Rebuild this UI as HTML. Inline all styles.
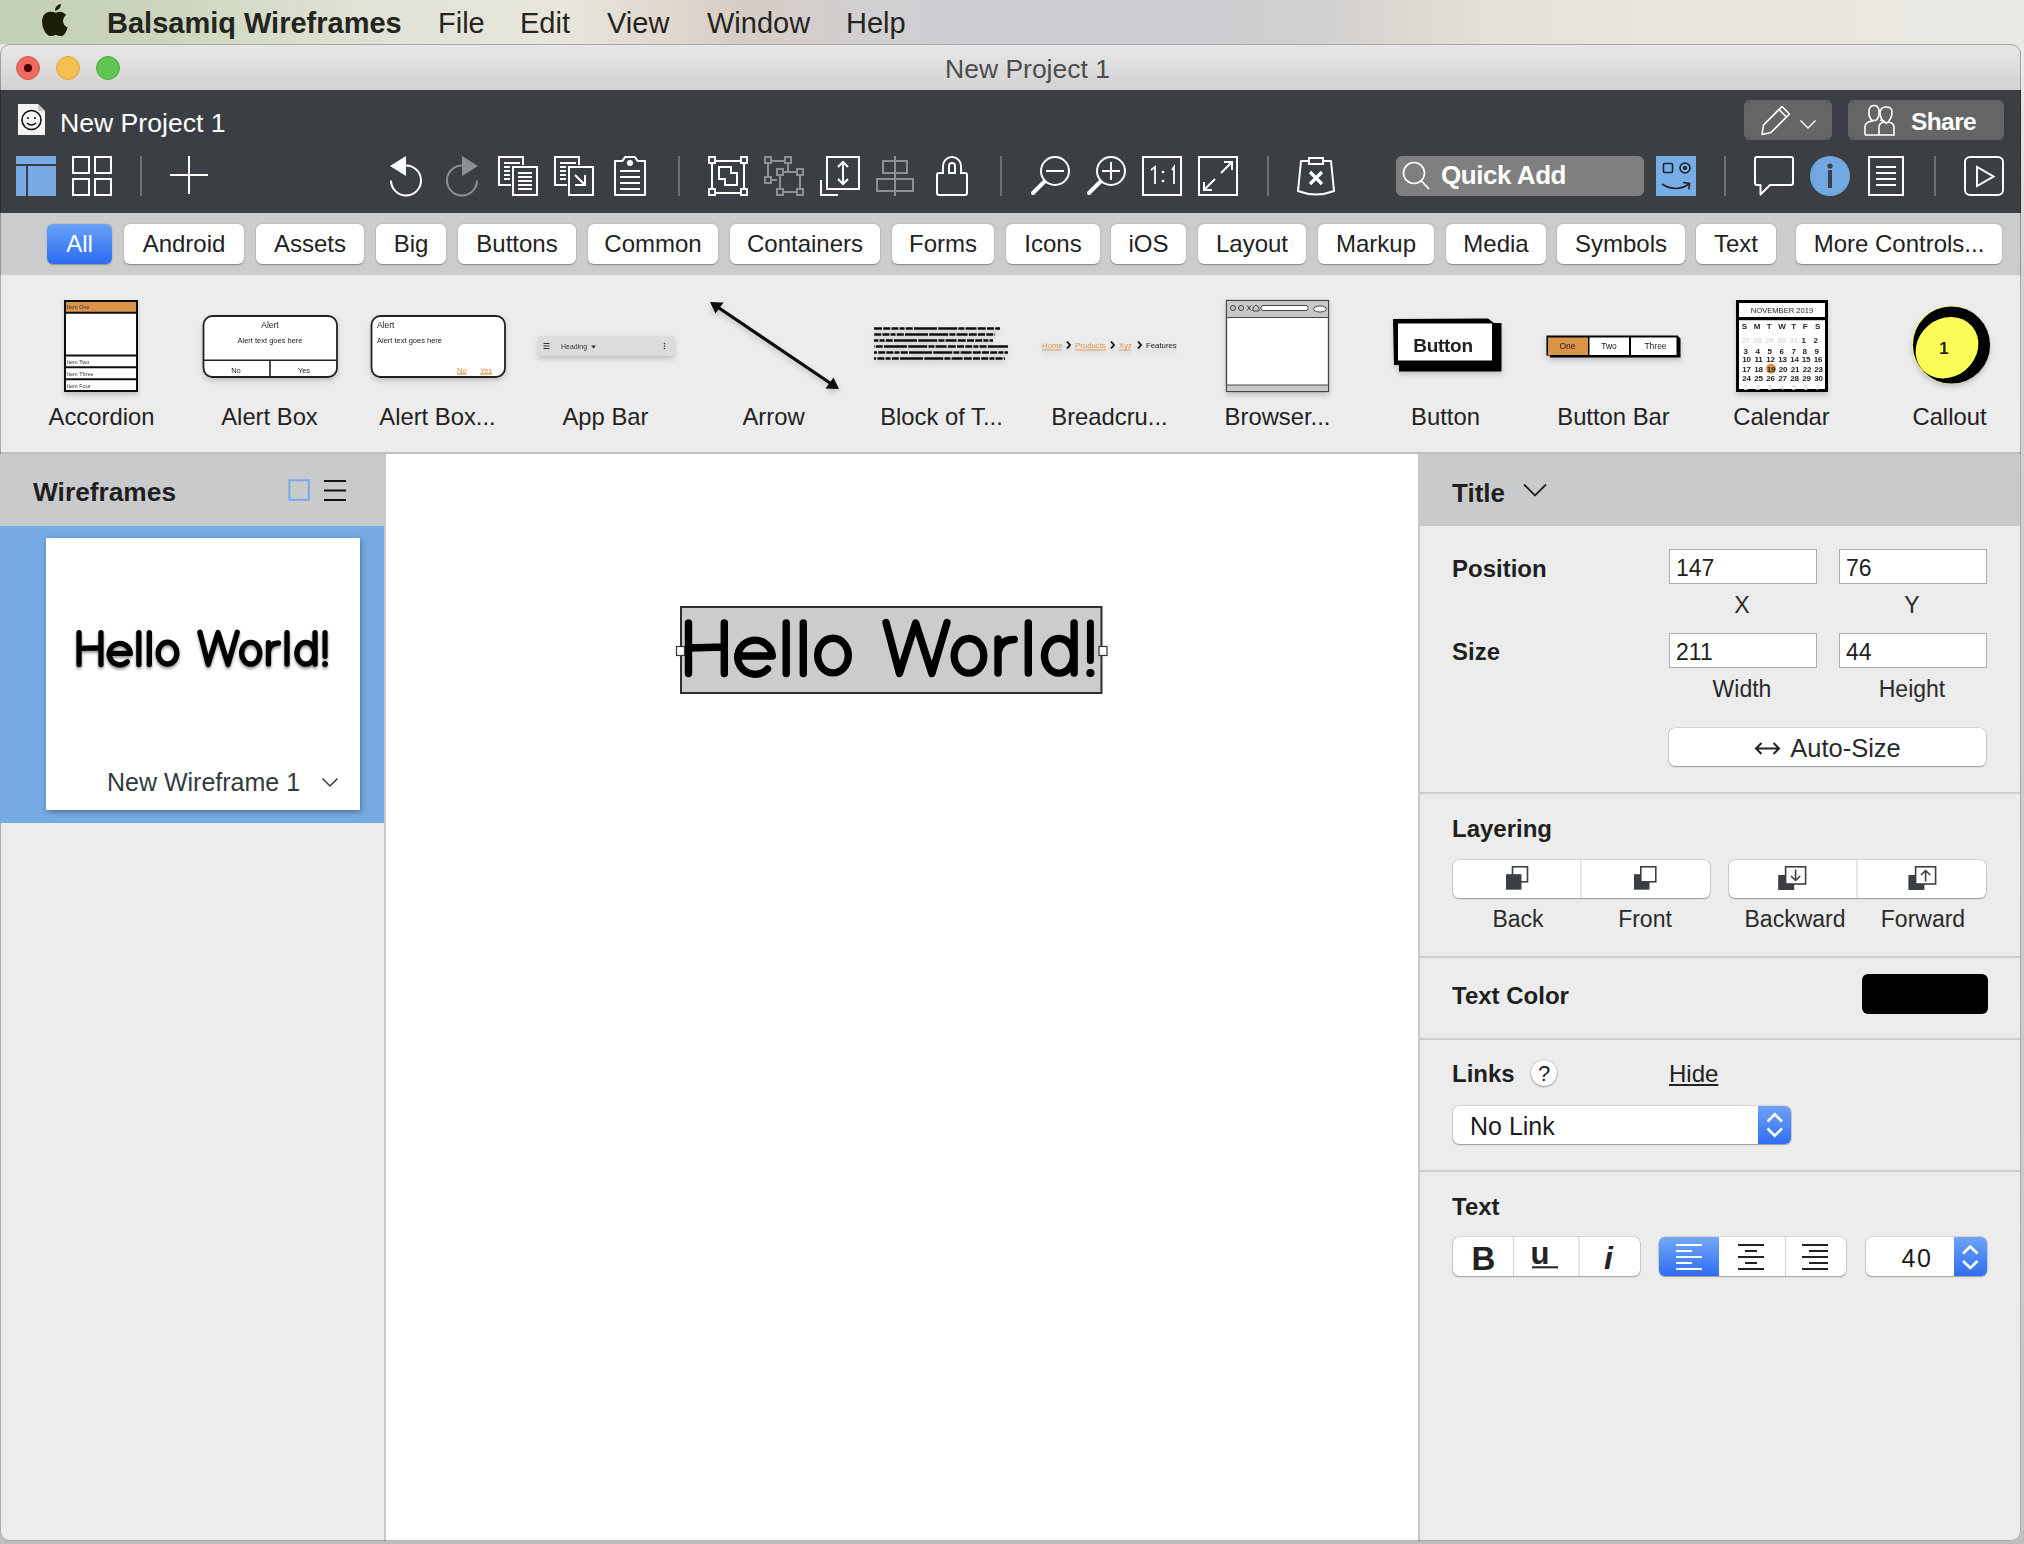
<!DOCTYPE html>
<html><head><meta charset="utf-8">
<style>
*{margin:0;padding:0;box-sizing:border-box}
html,body{width:2024px;height:1544px;overflow:hidden;position:relative;font-family:"Liberation Sans",sans-serif;background:#e4e4e4}
.a{position:absolute}
#menubar{left:0;top:0;width:2024px;height:44px;background:linear-gradient(90deg,#c3d0b2 0px,#cbd6bd 160px,#dfe1d3 340px,#e8e6dc 560px,#e0d6cc 680px,#d8cdc6 740px,#d2cfd0 860px,#cecfd4 960px,#cdced3 1150px,#d1d0d2 1320px,#dcd7d0 1400px,#e5e1d9 1490px,#e9e6de 1700px,#ebe9e4 2024px)}
.mi{position:absolute;top:1px;height:44px;line-height:44px;font-size:29px;color:#25251f;white-space:nowrap}
#shadowR{left:2018px;top:44px;width:6px;height:1500px;background:linear-gradient(#ebebeb,#d2d2d2 250px,#cacaca 900px,#c8c8c8)}
#shadowB{left:0;top:1530px;width:2024px;height:14px;background:#bdbdbd}
#win{left:0;top:44px;width:2021px;height:1497px;border-radius:10px;overflow:hidden;background:#ececec}
#winb{left:0;top:44px;width:2021px;height:1497px;border-radius:10px;border:1px solid rgba(0,0,0,.28);pointer-events:none}
#titlebar{left:0;top:0;width:2021px;height:46px;background:linear-gradient(#e8e8e8,#d2d2d2)}
.tl{position:absolute;top:12px;width:24px;height:24px;border-radius:50%}
#toolbar{left:0;top:46px;width:2021px;height:123px;background:#3b3f43}
#tabs{left:0;top:169px;width:2021px;height:62px;background:#cbcccd}
.tab{position:absolute;top:11px;height:40px;border-radius:6px;background:#fff;box-shadow:0 0.5px 1.5px rgba(0,0,0,.35);font-size:24px;line-height:40px;text-align:center;color:#222;white-space:nowrap}
#lib{left:0;top:231px;width:2021px;height:179px;background:#ececec;border-bottom:2px solid #bfbfbf}
.lbl{position:absolute;top:100px;width:160px;text-align:center;font-size:23px;color:#222;white-space:nowrap}
#left{left:0;top:410px;width:386px;height:1090px;background:#ececec;border-right:2px solid #c8c8c8}
#canvas{left:386px;top:410px;width:1032px;height:1090px;background:#fff}
#right{left:1418px;top:410px;width:603px;height:1090px;background:#ececec;border-left:2px solid #c8c8c8}
</style></head><body>
<div id="menubar" class="a">
  <svg class="a" style="left:42px;top:4px" width="27" height="33" viewBox="0 0 27 33"><path fill="#1b1f04" d="M13.8 8.8C12 8 10 7.6 8 7.7C3 8 0 12 0.1 18C0.2 24 3.5 30 7 31.7C9 32.5 11 32 13.8 30.8C16.5 32 18.5 32.5 20.5 31.7C23 30.5 24.8 27 25.6 23.5C22.5 22 21 19.5 21 17C21 14 23 12 24 11C22 8.5 19.5 7.5 17.3 7.7C16 7.8 15 8.3 13.8 8.8Z M13 6.6C12.8 3.5 15.5 0.3 18.9 0C19.1 3.2 16.5 6.4 13 6.6Z"/></svg>
  <div class="mi" style="left:107px;font-weight:bold">Balsamiq Wireframes</div>
  <div class="mi" style="left:438px">File</div>
  <div class="mi" style="left:520px">Edit</div>
  <div class="mi" style="left:607px">View</div>
  <div class="mi" style="left:707px">Window</div>
  <div class="mi" style="left:846px">Help</div>
</div>
<div id="shadowR" class="a"></div>
<div id="shadowB" class="a"></div>
<div id="win" class="a">
  <div id="titlebar" class="a">
    <div class="tl" style="left:16px;background:#ee6a5e;border:1px solid #d9574c"><div style="position:absolute;left:7px;top:7px;width:8px;height:8px;border-radius:50%;background:#4b0002"></div></div>
    <div class="tl" style="left:56px;background:#f5c04f;border:1px solid #dca93e"></div>
    <div class="tl" style="left:96px;background:#5fc553;border:1px solid #4fae43"></div>
    <div class="a" style="left:945px;top:1px;height:46px;line-height:48px;font-size:26.5px;color:#4d4d4d;white-space:nowrap">New Project 1</div>
  </div>
  <div id="toolbar" class="a"></div>
  <div id="tabs" class="a">
<div class="tab" style="left:47px;width:65px;background:linear-gradient(#6aa2f7,#2a6bf2);color:#fff;box-shadow:0 0.5px 1.5px rgba(0,0,0,.3)">All</div>
<div class="tab" style="left:124px;width:120px">Android</div>
<div class="tab" style="left:256px;width:108px">Assets</div>
<div class="tab" style="left:376px;width:70px">Big</div>
<div class="tab" style="left:458px;width:118px">Buttons</div>
<div class="tab" style="left:588px;width:130px">Common</div>
<div class="tab" style="left:730px;width:150px">Containers</div>
<div class="tab" style="left:892px;width:102px">Forms</div>
<div class="tab" style="left:1006px;width:94px">Icons</div>
<div class="tab" style="left:1111px;width:75px">iOS</div>
<div class="tab" style="left:1198px;width:108px">Layout</div>
<div class="tab" style="left:1318px;width:116px">Markup</div>
<div class="tab" style="left:1446px;width:100px">Media</div>
<div class="tab" style="left:1557px;width:128px">Symbols</div>
<div class="tab" style="left:1696px;width:80px">Text</div>
<div class="tab" style="left:1796px;width:206px">More Controls...</div>
</div>
  <div id="lib" class="a"></div>
  <div id="left" class="a"></div>
  <div id="canvas" class="a"></div>
  <div id="right" class="a"></div>
</div>
<div id="winb" class="a"></div>
<!--TOOLBAR-->
<svg class="a" style="left:0;top:0" width="2024" height="1544" viewBox="0 0 2024 1544">
<g fill="none" stroke="#fff" stroke-width="2">
 <!-- doc icon -->
 <path d="M18 104 H38 L45 111 V135 H18 Z" fill="#f4f4f4" stroke="none"/>
 <path d="M38 104 L45 111 H38 Z" fill="#c8c8c8" stroke="none"/>
 <circle cx="31.5" cy="120" r="9.5" stroke="#111" stroke-width="1.6"/>
 <circle cx="28" cy="118" r="1.1" fill="#111" stroke="none"/>
 <circle cx="35" cy="118" r="1.1" fill="#111" stroke="none"/>
 <path d="M27 123 Q31.5 127 36 123" stroke="#111" stroke-width="1.4"/>
 <!-- layout icon blue -->
 <rect x="16" y="156" width="40" height="8" fill="#78aae6" stroke="none"/>
 <rect x="16" y="166" width="10" height="30" fill="#78aae6" stroke="none"/>
 <rect x="28" y="166" width="28" height="30" fill="#78aae6" stroke="none"/>
 <!-- grid -->
 <rect x="73" y="157" width="16" height="16"/>
 <rect x="95" y="157" width="16" height="16"/>
 <rect x="73" y="179" width="16" height="16"/>
 <rect x="95" y="179" width="16" height="16"/>
 <!-- separators -->
 <g stroke="#6f7072"><path d="M141 156V196M679 156V196M1001 156V196M1268 156V196M1725 156V196M1935 156V196"/></g>
 <!-- plus -->
 <path d="M170 175H208M189 156V194"/>
 <!-- undo -->
 <path d="M406 165.5 A15 15 0 1 1 391 180.5"/>
 <path d="M390 166 L406 156 V176 Z" fill="#fff" stroke="none"/>
 <!-- redo -->
 <g stroke="#8e9194"><path d="M462 165.5 A15 15 0 1 0 477 180.5"/></g>
 <path d="M478 166 L462 156 V176 Z" fill="#8e9194" stroke="none"/>
 <!-- copy -->
 <rect x="499" y="157" width="24" height="28"/>
 <path d="M504 163H520M504 167H510M504 171H510M504 175H510M504 179H510"/>
 <rect x="512" y="166" width="26" height="30" fill="#3b3f43" stroke="#3b3f43" stroke-width="2"/>
 <rect x="513" y="167" width="24" height="28"/>
 <path d="M518 173H532M518 177H532M518 181H532M518 185H532M518 189H532"/>
 <!-- duplicate -->
 <rect x="555" y="157" width="24" height="28"/>
 <path d="M560 163H576M560 167H566M560 171H566M560 175H566M560 179H566"/>
 <rect x="568" y="166" width="26" height="30" fill="#3b3f43" stroke="#3b3f43" stroke-width="2"/>
 <rect x="569" y="167" width="24" height="28"/>
 <path d="M575 175L584.5 184.5M575 185H585V175"/>
 <!-- clipboard -->
 <path d="M615 161 H622.5 L625 157 H635 L637.5 161 H645 V195 H615 Z" stroke-linejoin="round"/>
 <circle cx="630" cy="163" r="3" fill="#fff" stroke="none"/>
 <path d="M620 171H640M620 177H640M620 183H640M620 189H640"/>
 <!-- group -->
 <path d="M712 164V188M744 164V188M716 161H740M716 193H740"/>
 <rect x="709" y="157" width="6" height="6"/><rect x="741" y="157" width="6" height="6"/>
 <rect x="709" y="189" width="6" height="6"/><rect x="741" y="189" width="6" height="6"/>
 <path d="M719 167H731V173H737V185H725V179H719Z"/>
 <!-- ungroup -->
 <g stroke="#8e9194">
  <rect x="765" y="157" width="6" height="6"/><rect x="785" y="157" width="6" height="6"/>
  <rect x="765" y="177" width="6" height="6"/><rect x="777" y="169" width="6" height="6"/>
  <rect x="797" y="169" width="6" height="6"/><rect x="777" y="189" width="6" height="6"/>
  <rect x="797" y="189" width="6" height="6"/>
  <path d="M771 161H785M768 163V177M771 180H777M788 163V172M783 172H797M780 175V189M800 175V189M783 192H797"/>
 </g>
 <!-- size -->
 <rect x="827" y="157" width="32" height="32"/>
 <path d="M821 180V195H838"/>
 <path d="M843 162V184M838 167L843 162L848 167M838 179L843 184L848 179"/>
 <!-- align -->
 <g stroke="#8e9194"><path d="M895 156V196"/><rect x="883" y="161" width="24" height="12"/><rect x="877" y="179" width="36" height="12"/></g>
 <!-- lock -->
 <path d="M943 173V166A9 9 0 0 1 961 166V173H965A2 2 0 0 1 967 175V193A2 2 0 0 1 965 195H939A2 2 0 0 1 937 193V175A2 2 0 0 1 939 173Z"/>
 <path d="M949 173V166A3 3 0 0 1 955 166V173Z"/>
 <!-- zoom out -->
 <circle cx="1055" cy="171" r="14"/>
 <path d="M1046 171H1064"/>
 <path d="M1033 193L1044 182" stroke-width="4" stroke-linecap="round"/>
 <!-- zoom in -->
 <circle cx="1111" cy="171" r="14"/>
 <path d="M1102 171H1120M1111 162V180"/>
 <path d="M1089 193L1100 182" stroke-width="4" stroke-linecap="round"/>
 <!-- 1:1 -->
 <rect x="1143" y="157" width="38" height="38"/>
 <path d="M1151 170L1155 167V184M1172 170L1174 167V184" stroke-width="1.8"/>
 <circle cx="1163" cy="172" r="1.3" fill="#fff" stroke="none"/><circle cx="1163" cy="181" r="1.3" fill="#fff" stroke="none"/>
 <!-- fit -->
 <rect x="1199" y="157" width="38" height="38"/>
 <path d="M1221 173L1232 162M1224 162H1232V170M1215 179L1204 190M1204 182V190H1212"/>
 <!-- delete bag -->
 <path d="M1309 161H1301L1298 191Q1316 198 1334 191L1331 161H1323" stroke-linejoin="round"/>
 <rect x="1309" y="158" width="14" height="6"/>
 <path d="M1310 172L1322 184M1322 172L1310 184" stroke-width="3.2"/>
 <!-- quick add -->
 <rect x="1396" y="156" width="248" height="40" rx="6" fill="#7f7f7f" stroke="none"/>
 <circle cx="1414" cy="173" r="10.5" stroke-width="1.6"/>
 <path d="M1421.5 181L1429 189" stroke-width="1.8"/>
 <!-- blue face -->
 <rect x="1656" y="156" width="40" height="40" fill="#78aee8" stroke="none"/>
 <g stroke="#222" stroke-width="1.6"><rect x="1663.5" y="163.5" width="9" height="9" rx="1"/><circle cx="1685" cy="168" r="5"/>
 <path d="M1662 184Q1676 193 1689 184M1683 182.5L1689.5 183.5L1689 189.5"/></g>
 <circle cx="1685" cy="168" r="2" fill="#222" stroke="none"/>
 <!-- comment -->
 <path d="M1757 157H1791A2 2 0 0 1 1793 159V183A2 2 0 0 1 1791 185H1770L1760.5 194.5V185H1757A2 2 0 0 1 1755 183V159A2 2 0 0 1 1757 157Z" stroke-linejoin="round"/>
 <!-- info -->
 <circle cx="1830" cy="176" r="20" fill="#72a7e2" stroke="none"/>
 <circle cx="1830" cy="166" r="2.6" fill="#3b3f43" stroke="none"/>
 <rect x="1828" y="170" width="4" height="18" fill="#3b3f43" stroke="none"/>
 <!-- doc lines -->
 <rect x="1869" y="157" width="34" height="38"/>
 <path d="M1876 167H1896M1876 173H1896M1876 179H1896M1876 185H1896"/>
 <!-- play -->
 <rect x="1965" y="157" width="38" height="38" rx="5"/>
 <path d="M1977 167V186L1993.5 176.5Z" stroke-linejoin="miter"/>
 <!-- pencil button -->
 <rect x="1744" y="100" width="88" height="40" rx="6" fill="#656565" stroke="none"/>
 <rect x="1848" y="100" width="156" height="40" rx="6" fill="#656565" stroke="none"/>
 <path d="M1762 134.5L1763.5 125L1782 106.5L1789.5 114L1771 132.5Z M1779 109.5L1786.5 117" stroke-width="1.6" stroke-linejoin="round"/>
 <path d="M1800.5 120.5L1808 128L1815.5 120.5" stroke-width="1.4"/>
 <!-- people -->
 <g stroke-width="1.6">
 <path d="M1865 135V127Q1865 122 1872 121L1875 120M1880 120Q1885 121 1887 124"/>
 <path d="M1873 121Q1868 118 1869 110Q1870 105.5 1874 105.5Q1878 105.5 1879 110Q1880 118 1875 121"/>
 <path d="M1879 135V127Q1879 123 1884 122Q1880 118 1880 112Q1881 107 1886 107Q1892 107 1892 112Q1892 118 1888 122Q1894 123 1894 127V135H1865"/>
 </g>
</g>
<text x="1911" y="130" font-family="Liberation Sans" font-weight="bold" font-size="24.5" letter-spacing="-0.6" fill="#fff">Share</text>
<text x="1441" y="183.5" font-family="Liberation Sans" font-weight="bold" font-size="26" letter-spacing="-0.45" fill="#fff">Quick Add</text>
<text x="60" y="131.5" font-family="Liberation Sans" font-size="26.6" fill="#fff">New Project 1</text>
</svg>

<!--/TOOLBAR-->
<!--LIB-->
<svg class="a" style="left:0;top:0" width="2024" height="1544" viewBox="0 0 2024 1544" font-family="Liberation Sans">
<defs>
 <filter id="sh" x="-20%" y="-20%" width="140%" height="160%"><feDropShadow dx="0" dy="3" stdDeviation="2.5" flood-color="#000" flood-opacity="0.18"/></filter>
 <filter id="blur05"><feGaussianBlur stdDeviation="0.35"/></filter>
</defs>
<g filter="url(#sh)">
 <!-- Accordion -->
 <rect x="65" y="301" width="72" height="90" fill="#fff" stroke="#111" stroke-width="2"/>
 <rect x="66" y="302" width="70" height="10.5" fill="#d9944a"/>
 <path d="M65 312.8H137M65 355.5H137M65 367.3H137M65 379.2H137" stroke="#111" stroke-width="2" fill="none"/>
 <g font-size="5.5" fill="#333"><text x="67" y="309">Item One</text><text x="67" y="363.5">Item Two</text><text x="67" y="375.5">Item Three</text><text x="67" y="387.5">Item Four</text></g>
 <!-- Alert box -->
 <rect x="203.5" y="316" width="133.5" height="61" rx="9" fill="#fff" stroke="#222" stroke-width="1.8"/>
 <path d="M204 360.3H337M270 360.3V377" stroke="#222" stroke-width="1.6" fill="none"/>
 <g font-size="7.5" fill="#222" text-anchor="middle"><text x="270" y="327.5" font-size="8.5">Alert</text><text x="270" y="343">Alert text goes here</text><text x="236" y="372.5">No</text><text x="304" y="372.5">Yes</text></g>
 <!-- Alert box 2 -->
 <rect x="371.5" y="316" width="133.5" height="61" rx="9" fill="#fff" stroke="#222" stroke-width="1.8"/>
 <g font-size="7.5" fill="#222"><text x="377" y="327.5" font-size="8.5">Alert</text><text x="377" y="343">Alert text goes here</text></g>
 <g font-size="7.5" fill="#d9944a"><text x="457" y="372.5" text-decoration="underline">No</text><text x="480" y="372.5" text-decoration="underline">Yes</text></g>
 <path d="M457 374H466M480 374H492" stroke="#d9944a" stroke-width="0.8"/>
 <!-- App bar -->
 <rect x="538" y="336" width="136" height="20" fill="#dcdcdc"/>
 <path d="M543.5 343.5H549.5M543.5 346H549.5M543.5 348.5H549.5" stroke="#333" stroke-width="1.2"/>
 <text x="561" y="349" font-size="7" fill="#333">Heading</text>
 <path d="M591 345.5H596L593.5 348.5Z" fill="#333"/>
 <circle cx="664.5" cy="343.5" r="0.8" fill="#333"/><circle cx="664.5" cy="346" r="0.8" fill="#333"/><circle cx="664.5" cy="348.5" r="0.8" fill="#333"/>
 <!-- Arrow -->
 <path d="M716 306L833 385" stroke="#111" stroke-width="3.2" fill="none"/>
 <path d="M710 302L723.5 302.5L715.5 313.5Z M839 389L825.5 388.5L833.5 377.5Z" fill="#111"/>
 <!-- Block of text -->
 <g stroke="#111" stroke-width="2.7" stroke-dasharray="8 1.2 7 1.2 7 1.2 5 1.2 7 1.2 23 1.2 19 1.2 6 1.2 11 1.2" fill="none">
  <path d="M874 328.5H1000"/><path d="M874 334.5H995" stroke-dashoffset="9"/><path d="M874 340.5H993" stroke-dashoffset="20"/>
  <path d="M874 346.5H1008" stroke-dashoffset="30"/><path d="M874 352.5H1008" stroke-dashoffset="5"/><path d="M874 358.5H1005" stroke-dashoffset="14"/>
 </g>
 <!-- Breadcrumb -->
 <g font-size="7.8"><text x="1042" y="348" fill="#d9944a">Home</text><text x="1075" y="348" fill="#d9944a">Products</text><text x="1119" y="348" fill="#d9944a">Xyz</text><text x="1146" y="348" fill="#222">Features</text></g>
 <path d="M1042 350H1062M1075 350H1106M1119 350H1131" stroke="#d9944a" stroke-width="0.9"/>
 <path d="M1067 341.5L1070 345L1067 348.5M1111 341.5L1114 345L1111 348.5M1138 341.5L1141 345L1138 348.5" stroke="#111" stroke-width="1.8" fill="none"/>
 <!-- Browser -->
 <rect x="1226.5" y="300.5" width="102" height="91" fill="#fff" stroke="#444" stroke-width="1.3"/>
 <rect x="1227" y="301" width="101" height="16.5" fill="#c8c8c8"/>
 <rect x="1227" y="385" width="101" height="6" fill="#c8c8c8"/>
 <path d="M1227 317.5H1328M1227 385H1328" stroke="#444" stroke-width="1"/>
 <rect x="1261" y="305.5" width="47" height="5" rx="2" fill="#fff" stroke="#333" stroke-width="0.9"/>
 <ellipse cx="1320" cy="309" rx="6.5" ry="3" fill="#fff" stroke="#333" stroke-width="0.9"/>
 <g fill="none" stroke="#333" stroke-width="0.9"><circle cx="1233" cy="308" r="2.5"/><circle cx="1241" cy="308" r="2.5"/><path d="M1247 305.5L1251 310.5M1251 305.5L1247 310.5"/><path d="M1256 305L1259 307.5V311H1253V307.5Z"/></g>
 <!-- Button -->
 <path d="M1393 319L1488 318.5L1494 323H1501.5V371.5H1399V365H1394Z" fill="#000"/>
 <rect x="1398" y="323.5" width="94" height="37" fill="#fff"/>
 <text x="1443" y="351.5" font-size="19" font-weight="bold" fill="#222" text-anchor="middle" letter-spacing="-0.3">Button</text>
 <!-- Button bar -->
 <path d="M1546.5 335.5H1677.5L1680.5 338.5V357.5H1550V355.5H1546.5Z" fill="#000"/>
 <rect x="1548" y="337.5" width="40" height="17.5" fill="#d9944a"/>
 <rect x="1589.5" y="337.5" width="39.5" height="17.5" fill="#fff"/>
 <rect x="1631" y="337.5" width="45.5" height="17.5" fill="#fff"/>
 <g font-size="8.5" fill="#222" text-anchor="middle"><text x="1567.5" y="349.2">One</text><text x="1609" y="349.2">Two</text><text x="1655.5" y="349.2">Three</text></g>
 <!-- Calendar -->
 <rect x="1737.5" y="301.5" width="89" height="89" fill="#fff" stroke="#000" stroke-width="3"/>
 <rect x="1736" y="317" width="92" height="3.2" fill="#000"/>
 <text x="1782" y="313" font-size="7.6" fill="#222" text-anchor="middle">NOVEMBER 2019</text>
 <circle cx="1771" cy="368.8" r="5" fill="#d9944a"/>
 <g font-size="8" font-weight="bold" fill="#222" text-anchor="middle" letter-spacing="-0.3">
  <text y="328.5"><tspan x="1744.3">S</tspan><tspan x="1757">M</tspan><tspan x="1769">T</tspan><tspan x="1782">W</tspan><tspan x="1793.6">T</tspan><tspan x="1805">F</tspan><tspan x="1817.5">S</tspan></text>
  <text y="343.3" fill="#ddd"><tspan x="1745.5">27</tspan><tspan x="1757.5">28</tspan><tspan x="1769.5">29</tspan><tspan x="1781.5">30</tspan><tspan x="1793.5">31</tspan></text>
  <text y="343.3"><tspan x="1803.5">1</tspan><tspan x="1815.5">2</tspan></text>
  <text y="353.5"><tspan x="1745.5">3</tspan><tspan x="1757.5">4</tspan><tspan x="1769.5">5</tspan><tspan x="1781.5">6</tspan><tspan x="1793.5">7</tspan><tspan x="1804.5">8</tspan><tspan x="1816.5">9</tspan></text>
  <text y="362.3"><tspan x="1746.5">10</tspan><tspan x="1758.5">11</tspan><tspan x="1770.5">12</tspan><tspan x="1782.5">13</tspan><tspan x="1794.5">14</tspan><tspan x="1806">15</tspan><tspan x="1818">16</tspan></text>
  <text y="371.5"><tspan x="1746.5">17</tspan><tspan x="1758.5">18</tspan><tspan x="1771">19</tspan><tspan x="1783">20</tspan><tspan x="1795">21</tspan><tspan x="1807">22</tspan><tspan x="1818.5">23</tspan></text>
  <text y="380.6"><tspan x="1746.5">24</tspan><tspan x="1758.5">25</tspan><tspan x="1770.5">26</tspan><tspan x="1782.5">27</tspan><tspan x="1794.5">28</tspan><tspan x="1806.5">29</tspan><tspan x="1818.5">30</tspan></text>
  <text y="389.5" fill="#ddd"><tspan x="1745.5">1</tspan><tspan x="1757.5">2</tspan><tspan x="1769.5">3</tspan><tspan x="1781.5">4</tspan><tspan x="1793.5">5</tspan><tspan x="1805.5">6</tspan><tspan x="1817.5">7</tspan></text>
 </g>
 <!-- Callout -->
 <circle cx="1951" cy="344.7" r="39" fill="#fcfc56"/>
 <circle cx="1951.5" cy="345" r="38.6" fill="#000"/>
 <ellipse cx="1947" cy="347.7" rx="33" ry="29" transform="rotate(-40 1947 347.7)" fill="#fcfc56"/>
 <text x="1944" y="354" font-size="17" font-weight="bold" fill="#222" text-anchor="middle">1</text>
</g>
<g font-size="23.8" fill="#222" text-anchor="middle" transform="translate(0,1)">
 <text x="101.5" y="424">Accordion</text><text x="269.5" y="424">Alert Box</text><text x="437.5" y="424">Alert Box...</text><text x="605.5" y="424">App Bar</text>
 <text x="773.5" y="424">Arrow</text><text x="941.5" y="424">Block of T...</text><text x="1109.5" y="424">Breadcru...</text><text x="1277.5" y="424">Browser...</text>
 <text x="1445.5" y="424">Button</text><text x="1613.5" y="424">Button Bar</text><text x="1781.5" y="424">Calendar</text><text x="1949.5" y="424">Callout</text>
</g>
</svg>

<!--/LIB-->
<!--PANELS-->
<div class="a" style="left:0;top:454px;width:384px;height:72px;background:#c9cacc"></div>
<div class="a" style="left:33px;top:454px;height:73px;line-height:76px;font-size:26.3px;font-weight:bold;color:#1e1e1e;white-space:nowrap">Wireframes</div>
<div class="a" style="left:0;top:526px;width:384px;height:297px;background:#76abe5"></div>
<div class="a" style="left:46px;top:538px;width:314px;height:272px;background:#fff;box-shadow:1px 2px 6px rgba(0,0,0,.35)"></div>
<div class="a" style="left:107px;top:762px;height:40px;line-height:40px;font-size:25px;color:#333a40;white-space:nowrap">New Wireframe 1</div>
<div class="a" style="left:0;top:526px;width:2024px;height:1px;background:transparent"></div>
<div class="a" style="left:1420px;top:454px;width:600px;height:72px;background:#c9cacc"></div>
<svg class="a" style="left:0;top:0" width="2024" height="1544" viewBox="0 0 2024 1544" font-family="Liberation Sans">
 <defs><filter id="tblur" x="-10%" y="-30%" width="120%" height="160%"><feGaussianBlur in="SourceGraphic" stdDeviation="0.55" result="b"/><feGaussianBlur in="SourceAlpha" stdDeviation="1.6" result="s"/><feOffset in="s" dy="1.8" result="so"/><feComponentTransfer in="so" result="sf"><feFuncA type="linear" slope="0.45"/></feComponentTransfer><feMerge><feMergeNode in="sf"/><feMergeNode in="b"/></feMerge></filter></defs>
 <!-- left header icons -->
 <rect x="289.3" y="480.3" width="19.5" height="19.5" fill="none" stroke="#78aae8" stroke-width="2"/>
 <path d="M324 481H346M324 490.5H346M324 500H346" stroke="#111" stroke-width="2"/>
 <path d="M322.5 778.5L330 786L337.5 778.5" fill="none" stroke="#333a40" stroke-width="1.5"/>
 <!-- canvas selection -->
 <rect x="681" y="607" width="420.5" height="86" fill="#cccccc" stroke="#2e2e2e" stroke-width="2"/>
 <g id="hw" fill="none" stroke="#000" stroke-width="7.4" stroke-linecap="round" stroke-linejoin="round">
  <path d="M688.5 623V673.5M724.3 623V673.5M688.5 648L724.3 647"/>
  <path d="M738.3 656H772.3A17.3 17 0 1 0 767.5 669"/>
  <path d="M786.2 623V673.5M803.3 623V673.5"/>
  <ellipse cx="833" cy="655.6" rx="15.3" ry="17.3"/>
  <path d="M886 622.5L899.5 673.5L915.6 623L931.9 673.5L947 622.5"/>
  <ellipse cx="969" cy="655.8" rx="14.8" ry="17.3"/>
  <path d="M998 639V673M998 653Q1000 639.5 1014.3 639.5"/>
  <path d="M1028.3 623V673"/>
  <ellipse cx="1059" cy="655.8" rx="14.5" ry="17.3"/>
  <path d="M1074.1 623V673"/>
  <path d="M1090.4 623V660.5" stroke-width="7"/>
  <circle cx="1090.4" cy="673" r="4.1" fill="#000" stroke="none"/>
 </g>
 <rect x="676.5" y="646.5" width="8" height="9" fill="#fff" stroke="#333" stroke-width="1.2"/>
 <rect x="1099" y="646.5" width="8" height="9" fill="#fff" stroke="#333" stroke-width="1.2"/>
 <!-- thumbnail -->
 <g filter="url(#tblur)"><g transform="translate(-342.3,240.1) scale(0.612,0.63)"><g fill="none" stroke="#000" stroke-width="8.6" stroke-linecap="round" stroke-linejoin="round">
  <path d="M688.5 623V673.5M724.3 623V673.5M688.5 648L724.3 647"/>
  <path d="M738.3 656H772.3A17.3 17 0 1 0 767.5 669"/>
  <path d="M786.2 623V673.5M803.3 623V673.5"/>
  <ellipse cx="833" cy="655.6" rx="15.3" ry="17.3"/>
  <path d="M886 622.5L899.5 673.5L915.6 623L931.9 673.5L947 622.5"/>
  <ellipse cx="969" cy="655.8" rx="14.8" ry="17.3"/>
  <path d="M998 639V673M998 653Q1000 639.5 1014.3 639.5"/>
  <path d="M1028.3 623V673"/>
  <ellipse cx="1059" cy="655.8" rx="14.5" ry="17.3"/>
  <path d="M1074.1 623V673"/>
  <path d="M1090.4 623V660.5" stroke-width="8.4"/>
  <circle cx="1090.4" cy="673" r="4.8" fill="#000" stroke="none"/>
 </g></g></g>
</svg>
<!--/PANELS-->
<!--RIGHT-->
<style>
.rl{position:absolute;font-size:24px;font-weight:bold;color:#1f1f1f;white-space:nowrap;line-height:30px}
.rs{position:absolute;font-size:23px;color:#2a2a2a;white-space:nowrap;line-height:30px;text-align:center;width:160px}
.inp{position:absolute;background:#fff;border:1px solid #adadad;height:35px;width:148px;font-size:23px;line-height:37px;padding-left:6px;color:#222}
.btn{position:absolute;background:#fff;border-radius:6px;box-shadow:0 0 0 0.6px rgba(0,0,0,.18),0 1px 1.5px rgba(0,0,0,.28)}
.hr{position:absolute;left:1419px;width:601px;height:2px;background:#cfcfcf}
</style>
<div class="rl" style="left:1452px;top:478px;font-size:26px">Title</div>
<div class="rl" style="left:1452px;top:554px">Position</div>
<div class="inp" style="left:1669px;top:549px">147</div>
<div class="inp" style="left:1839px;top:549px">76</div>
<div class="rs" style="left:1662px;top:590px">X</div>
<div class="rs" style="left:1832px;top:590px">Y</div>
<div class="rl" style="left:1452px;top:637px">Size</div>
<div class="inp" style="left:1669px;top:633px">211</div>
<div class="inp" style="left:1839px;top:633px">44</div>
<div class="rs" style="left:1662px;top:674px">Width</div>
<div class="rs" style="left:1832px;top:674px">Height</div>
<div class="btn" style="left:1669px;top:728px;width:317px;height:38px"></div>
<div class="rs" style="left:1669px;top:733px;width:317px;font-size:25.5px"><span style="display:inline-block;width:36px"></span>Auto-Size</div>
<div class="hr" style="top:792px"></div>
<div class="rl" style="left:1452px;top:814px">Layering</div>
<div class="btn" style="left:1453px;top:860px;width:257px;height:38px"></div>
<div class="btn" style="left:1729px;top:860px;width:257px;height:38px"></div>
<div class="rs" style="left:1438px;top:904px">Back</div>
<div class="rs" style="left:1565px;top:904px">Front</div>
<div class="rs" style="left:1715px;top:904px">Backward</div>
<div class="rs" style="left:1843px;top:904px">Forward</div>
<div class="hr" style="top:956px"></div>
<div class="rl" style="left:1452px;top:981px">Text Color</div>
<div class="a" style="left:1862px;top:974px;width:126px;height:40px;border-radius:6px;background:#000"></div>
<div class="hr" style="top:1038px"></div>
<div class="rl" style="left:1452px;top:1059px">Links</div>
<div class="a" style="left:1531px;top:1060px;width:26px;height:26px;border-radius:50%;background:#fff;box-shadow:0 0 0 0.6px rgba(0,0,0,.2),0 1px 1.5px rgba(0,0,0,.3);font-size:22px;line-height:27px;text-align:center;color:#222">?</div>
<div class="a" style="left:1669px;top:1059px;font-size:24px;line-height:30px;color:#222;text-decoration:underline;white-space:nowrap">Hide</div>
<div class="btn" style="left:1453px;top:1106px;width:338px;height:38px;overflow:hidden"><div style="position:absolute;right:0;top:0;width:33px;height:38px;background:linear-gradient(#6ea3f6,#2f6ef2)"></div></div>
<div class="a" style="left:1470px;top:1111px;font-size:25px;line-height:30px;color:#1a1a1a;white-space:nowrap">No Link</div>
<div class="hr" style="top:1170px"></div>
<div class="rl" style="left:1452px;top:1192px">Text</div>
<div class="btn" style="left:1453px;top:1237px;width:187px;height:39px"></div>
<div class="btn" style="left:1659px;top:1237px;width:187px;height:39px;overflow:hidden"><div style="position:absolute;left:0;top:0;width:60px;height:39px;background:linear-gradient(#74a8f7,#2e6df2)"></div></div>
<div class="btn" style="left:1866px;top:1237px;width:121px;height:39px;overflow:hidden"><div style="position:absolute;right:0;top:0;width:33px;height:39px;background:linear-gradient(#6ea3f6,#2f6ef2)"></div></div>
<div class="a" style="left:1873px;top:1243px;width:88px;text-align:center;font-size:25px;letter-spacing:1.5px;line-height:30px;color:#1a1a1a">40</div>
<svg class="a" style="left:0;top:0" width="2024" height="1544" viewBox="0 0 2024 1544" font-family="Liberation Sans">
 <path d="M1524 484.5L1535 495.5L1546 484.5" fill="none" stroke="#222" stroke-width="1.8"/>
 <g stroke="#d6d6d6" stroke-width="1.2"><path d="M1581 860V898M1857 860V898M1513.5 1237V1276M1579 1237V1276M1785.5 1237V1276"/></g>
 <path d="M1756 748.5H1779M1761.5 743L1756 748.5L1761.5 754M1773.5 743L1779 748.5L1773.5 754" fill="none" stroke="#222" stroke-width="2"/>
 <!-- layering icons -->
 <g fill="#3b3f43" stroke="#3b3f43">
  <rect x="1512.5" y="866.8" width="15" height="15" fill="#fff" stroke-width="1.6"/>
  <rect x="1506" y="874.2" width="15.5" height="15.5" stroke="none"/>
  <rect x="1634" y="874.2" width="15.5" height="15.5" stroke="none"/>
  <rect x="1640.8" y="866.8" width="15" height="15" fill="#fff" stroke-width="1.6"/>
  <rect x="1778.2" y="875" width="16" height="15" stroke="none"/>
  <rect x="1785.6" y="866.8" width="20" height="17.2" fill="#fff" stroke-width="1.6"/>
  <path d="M1795.6 869.5V880.5M1791 876L1795.6 880.5L1800.2 876" fill="none" stroke-width="1.6"/>
  <rect x="1908.4" y="875" width="16" height="15" stroke="none"/>
  <rect x="1915.6" y="866.8" width="20" height="17.2" fill="#fff" stroke-width="1.6"/>
  <path d="M1925.6 881.5V870.5M1921 875L1925.6 870.5L1930.2 875" fill="none" stroke-width="1.6"/>
 </g>
 <!-- B U I -->
 <text x="1471.5" y="1269.5" font-size="33" font-weight="bold" fill="#222">B</text>
 <text x="1530.5" y="1263.5" font-size="31" font-weight="bold" fill="#222">u</text>
 <path d="M1532 1267.3H1558" stroke="#222" stroke-width="2"/>
 <text x="1604" y="1268.7" font-size="32" font-style="italic" font-weight="bold" fill="#222">i</text>
 <g stroke="#fff" stroke-width="2"><path d="M1676 1245H1702M1676 1251H1692M1676 1257H1702M1676 1263H1692M1676 1269H1702"/></g>
 <g stroke="#222" stroke-width="2"><path d="M1738 1245H1764M1745 1251H1757M1738 1257H1764M1745 1263H1757M1738 1269H1764"/>
 <path d="M1802 1245H1828M1809 1251H1828M1802 1257H1828M1809 1263H1828M1802 1269H1828"/></g>
 <g stroke="#fff" stroke-width="2" fill="none"><path d="M1767.5 1121.5L1774.7 1114.3L1782 1121.5M1767.5 1128.5L1774.7 1135.7L1782 1128.5" stroke-width="2.6"/>
 <path d="M1963 1253.5L1970.3 1246.5L1977.5 1253.5M1963 1261L1970.3 1268L1977.5 1261" stroke-width="2.6"/></g>
</svg>
<!--/RIGHT-->


</body></html>
